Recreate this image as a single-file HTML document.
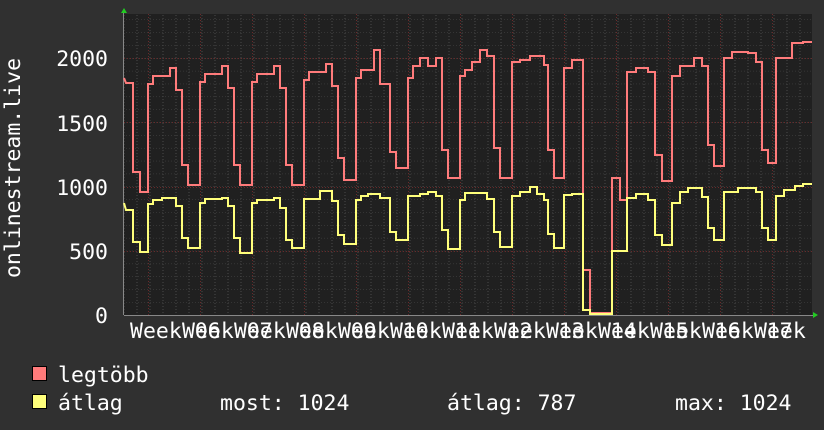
<!DOCTYPE html>
<html><head><meta charset="utf-8"><style>
html,body{margin:0;padding:0;background:#303030;width:824px;height:430px;overflow:hidden}
svg{display:block}
text{font-family:"DejaVu Sans Mono","Liberation Mono",monospace;fill:#fff;font-size:21.5px}
</style></head><body>
<svg width="824" height="430" viewBox="0 0 824 430" xmlns="http://www.w3.org/2000/svg">
<defs>
<pattern id="minH" x="0" y="315" width="824" height="12.85" patternUnits="userSpaceOnUse">
<line x1="0" y1="0" x2="824" y2="0" stroke="#4a4a4a" stroke-width="1" stroke-dasharray="1,2"/>
</pattern>
<pattern id="minV" x="123.5" y="0" width="13" height="430" patternUnits="userSpaceOnUse">
<line x1="0.5" y1="0" x2="0.5" y2="430" stroke="#4a4a4a" stroke-width="1" stroke-dasharray="1,2"/>
</pattern>
</defs>
<rect x="124" y="14" width="688" height="301" fill="#202020"/>
<rect x="124" y="14" width="688" height="301" fill="url(#minH)"/>
<rect x="124" y="14" width="688" height="301" fill="url(#minV)"/>
<g stroke="#6a2a2a" stroke-width="1" stroke-dasharray="1,2">
<line x1="124" x2="812" y1="58.5" y2="58.5"/><line x1="124" x2="812" y1="122.5" y2="122.5"/><line x1="124" x2="812" y1="187.5" y2="187.5"/><line x1="124" x2="812" y1="251.5" y2="251.5"/>
<line y1="14" y2="315" x1="148.5" x2="148.5"/><line y1="14" y2="315" x1="200.5" x2="200.5"/><line y1="14" y2="315" x1="252.5" x2="252.5"/><line y1="14" y2="315" x1="304.5" x2="304.5"/><line y1="14" y2="315" x1="356.5" x2="356.5"/><line y1="14" y2="315" x1="408.5" x2="408.5"/><line y1="14" y2="315" x1="460.5" x2="460.5"/><line y1="14" y2="315" x1="512.5" x2="512.5"/><line y1="14" y2="315" x1="564.5" x2="564.5"/><line y1="14" y2="315" x1="616.5" x2="616.5"/><line y1="14" y2="315" x1="668.5" x2="668.5"/><line y1="14" y2="315" x1="720.5" x2="720.5"/><line y1="14" y2="315" x1="772.5" x2="772.5"/>
</g>
<line x1="124" y1="315.5" x2="814" y2="315.5" stroke="#888" stroke-width="1"/>
<line x1="123.5" y1="12" x2="123.5" y2="315" stroke="#888" stroke-width="1"/>
<polygon points="121,13 124,8 127,13" fill="#2c2"/>
<polygon points="813,312 818,315 813,318" fill="#2c2"/>
<polyline fill="none" stroke="#ff7b7b" stroke-width="2" points="124,78 126,83 133,83 133,172 140,172 140,192 148,192 148,84 153,84 153,76 170,76 170,68 176,68 176,90 182,90 182,165 188,165 188,185 200,185 200,82 205,82 205,74 222,74 222,66 228,66 228,88 234,88 234,165 240,165 240,185 252,185 252,82 257,82 257,74 274,74 274,66 280,66 280,88 286,88 286,165 292,165 292,185 304,185 304,80 309,80 309,72 326,72 326,64 332,64 332,86 338,86 338,158 344,158 344,180 356,180 356,78 361,78 361,70 374,70 374,50 380,50 380,84 390,84 390,152 396,152 396,168 408,168 408,78 413,78 413,66 420,66 420,58 428,58 428,66 436,66 436,58 442,58 442,150 448,150 448,178 460,178 460,76 465,76 465,70 472,70 472,62 480,62 480,50 487,50 487,56 494,56 494,148 500,148 500,178 512,178 512,62 520,62 520,60 530,60 530,56 544,56 544,65 548,65 548,150 554,150 554,178 564,178 564,68 572,68 572,60 583,60 583,270 590,270 590,313 612,313 612,178 620,178 620,200 627,200 627,72 636,72 636,68 648,68 648,72 655,72 655,155 662,155 662,181 672,181 672,76 680,76 680,66 694,66 694,58 702,58 702,66 708,66 708,145 714,145 714,166 724,166 724,58 732,58 732,52 748,52 748,53 756,53 756,62 762,62 762,150 768,150 768,163 776,163 776,58 792,58 792,43 803,43 803,42 812,42"/>
<polyline fill="none" stroke="#ffff7b" stroke-width="2" points="124,203 126,210 133,210 133,242 140,242 140,252 148,252 148,204 153,204 153,200 162,200 162,198 176,198 176,206 182,206 182,238 188,238 188,248 200,248 200,203 205,203 205,199 222,199 222,198 228,198 228,206 234,206 234,238 240,238 240,253 252,253 252,203 257,203 257,200 274,200 274,198 280,198 280,208 286,208 286,240 292,240 292,248 304,248 304,199 320,199 320,191 332,191 332,201 338,201 338,235 344,235 344,244 356,244 356,200 361,200 361,196 368,196 368,194 380,194 380,198 390,198 390,232 396,232 396,240 408,240 408,196 420,196 420,194 428,194 428,192 436,192 436,196 442,196 442,230 448,230 448,249 460,249 460,200 465,200 465,193 487,193 487,199 494,199 494,232 500,232 500,247 512,247 512,196 520,196 520,192 530,192 530,187 537,187 537,194 544,194 544,200 548,200 548,234 554,234 554,248 564,248 564,195 572,195 572,194 583,194 583,310 590,310 590,314 612,314 612,251 627,251 627,198 636,198 636,194 648,194 648,200 655,200 655,235 662,235 662,245 672,245 672,203 680,203 680,192 688,192 688,188 702,188 702,197 708,197 708,228 714,228 714,240 724,240 724,192 738,192 738,188 756,188 756,192 762,192 762,228 768,228 768,240 776,240 776,196 784,196 784,190 795,190 795,186 803,186 803,184 812,184"/>
<g text-anchor="end">
<text x="108" y="66">2000</text><text x="108" y="131">1500</text><text x="108" y="195">1000</text><text x="108" y="259">500</text><text x="108" y="323">0</text>
</g>
<text transform="translate(20,168) rotate(-90)" text-anchor="middle">onlinestream.live</text>
<g>
<text x="130" y="338">Week 06</text><text x="182" y="338">Week 07</text><text x="234" y="338">Week 08</text><text x="286" y="338">Week 09</text><text x="338" y="338">Week 10</text><text x="390" y="338">Week 11</text><text x="442" y="338">Week 12</text><text x="494" y="338">Week 13</text><text x="546" y="338">Week 14</text><text x="598" y="338">Week 15</text><text x="650" y="338">Week 16</text><text x="702" y="338">Week 17</text><text x="754" y="338">Week</text>
</g>
<rect x="32.5" y="366.5" width="14" height="14" fill="#ff7b7b" stroke="#000"/>
<rect x="32.5" y="394.5" width="14" height="14" fill="#ffff7b" stroke="#000"/>
<text x="58" y="382">legtöbb</text>
<text x="58" y="410">átlag</text>
<text x="220" y="410">most: 1024</text>
<text x="447" y="410">átlag: 787</text>
<text x="675" y="410">max: 1024</text>
</svg>
</body></html>
